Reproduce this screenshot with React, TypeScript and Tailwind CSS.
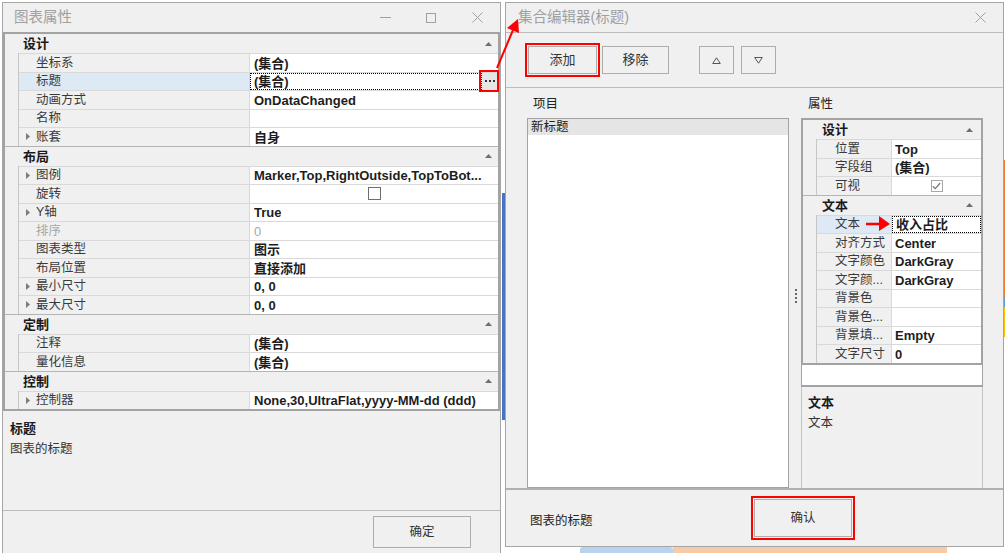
import type { ReactNode } from "react";

type PropRow = {
  label: string;
  value?: string;
  expandable?: boolean;
  disabled?: boolean;
  checkbox?: "empty" | "checked";
  selected?: boolean;
  ellipsis?: boolean;
};

type Category = { title: string; rows: PropRow[] };

const leftCategories: Category[] = [
  {
    title: "设计",
    rows: [
      { label: "坐标系", value: "(集合)" },
      { label: "标题", value: "(集合)", selected: true, ellipsis: true },
      { label: "动画方式", value: "OnDataChanged" },
      { label: "名称", value: "" },
      { label: "账套", value: "自身", expandable: true },
    ],
  },
  {
    title: "布局",
    rows: [
      { label: "图例", value: "Marker,Top,RightOutside,TopToBot...", expandable: true },
      { label: "旋转", checkbox: "empty" },
      { label: "Y轴", value: "True", expandable: true },
      { label: "排序", value: "0", disabled: true },
      { label: "图表类型", value: "图示" },
      { label: "布局位置", value: "直接添加" },
      { label: "最小尺寸", value: "0, 0", expandable: true },
      { label: "最大尺寸", value: "0, 0", expandable: true },
    ],
  },
  {
    title: "定制",
    rows: [
      { label: "注释", value: "(集合)" },
      { label: "量化信息", value: "(集合)" },
    ],
  },
  {
    title: "控制",
    rows: [{ label: "控制器", value: "None,30,UltraFlat,yyyy-MM-dd (ddd)", expandable: true }],
  },
];

const rightCategories: Category[] = [
  {
    title: "设计",
    rows: [
      { label: "位置", value: "Top" },
      { label: "字段组", value: "(集合)" },
      { label: "可视", checkbox: "checked" },
    ],
  },
  {
    title: "文本",
    rows: [
      { label: "文本", value: "收入占比", selected: true },
      { label: "对齐方式", value: "Center" },
      { label: "文字颜色", value: "DarkGray" },
      { label: "文字颜...", value: "DarkGray" },
      { label: "背景色", value: "" },
      { label: "背景色...", value: "" },
      { label: "背景填...", value: "Empty" },
      { label: "文字尺寸", value: "0" },
    ],
  },
];

function CollapseGlyph() {
  return (
    <svg width="7" height="4" viewBox="0 0 7 4">
      <path d="M0 4 L3.5 0 L7 4 Z" fill="#6f6f6f" />
    </svg>
  );
}

function ExpandGlyph() {
  return (
    <svg width="4" height="7" viewBox="0 0 4 7">
      <path d="M0 0 L4 3.5 L0 7 Z" fill="#7c7c7c" />
    </svg>
  );
}

function CaptionButton({ children }: { children: ReactNode }) {
  return <div className="flex h-full w-[46px] items-center justify-center">{children}</div>;
}

function TitleBar({ title, full }: { title: string; full?: boolean }) {
  return (
    <div className="flex h-[29px] shrink-0 items-center">
      <span className="flex-1 pl-[11px] text-[14.5px] text-[#a0a0a0]">{title}</span>
      {full && (
        <>
          <CaptionButton>
            <svg width="11" height="1" viewBox="0 0 11 1">
              <path d="M0 0.5 H11" stroke="#a0a0a0" />
            </svg>
          </CaptionButton>
          <CaptionButton>
            <svg width="10" height="10" viewBox="0 0 10 10">
              <rect x="0.5" y="0.5" width="9" height="9" fill="none" stroke="#a0a0a0" />
            </svg>
          </CaptionButton>
        </>
      )}
      <CaptionButton>
        <svg width="11" height="11" viewBox="0 0 11 11">
          <path d="M0.5 0.5 L10.5 10.5 M10.5 0.5 L0.5 10.5" stroke="#a0a0a0" />
        </svg>
      </CaptionButton>
    </div>
  );
}

function Checkbox({ checked }: { checked?: boolean }) {
  if (checked) {
    return (
      <div className="flex h-[12px] w-[12px] items-center justify-center border border-[#a8a8a8] bg-white">
        <svg width="9" height="8" viewBox="0 0 9 8">
          <path d="M0.8 4.2 L3.3 6.6 L8.2 1" fill="none" stroke="#777" strokeWidth="1.2" />
        </svg>
      </div>
    );
  }
  return <div className="h-[13px] w-[13px] border border-[#6f6f6f] bg-white" />;
}

function GridValue({ row, side }: { row: PropRow; side: "left" | "right" }) {
  const pad = side === "left" ? "pl-[4px]" : "pl-[3px]";
  if (row.checkbox) {
    return (
      <div className="flex flex-1 items-center justify-center border-t border-[#d9d9d9] bg-white">
        <Checkbox checked={row.checkbox === "checked"} />
      </div>
    );
  }
  const text = (
    <span
      className={`overflow-hidden whitespace-nowrap pt-[1px] text-[13px] ${
        row.disabled ? "font-normal text-[#a8a8a8]" : "font-bold text-[#1d1d1d]"
      }`}
    >
      {row.value}
    </span>
  );
  if (row.selected) {
    return (
      <div className="flex min-w-0 flex-1 border-t border-[#d9d9d9] bg-white">
        <div className="flex min-w-0 flex-1 items-center border border-dotted border-black pl-[3px]">
          {text}
        </div>
        {row.ellipsis && (
          <div className="relative flex w-[16px] shrink-0 items-center justify-center gap-[2px] bg-[#e6e6e6]">
            <span className="h-[2px] w-[2px] bg-[#333]" />
            <span className="h-[2px] w-[2px] bg-[#333]" />
            <span className="h-[2px] w-[2px] bg-[#333]" />
            <div className="absolute -bottom-[2px] -left-[3px] -right-[1px] -top-[3px] border-2 border-[#f00]" />
          </div>
        )}
      </div>
    );
  }
  return (
    <div className={`flex min-w-0 flex-1 items-center border-t border-[#d9d9d9] bg-white ${pad}`}>
      {text}
    </div>
  );
}

function PropertyGrid({ categories, side }: { categories: Category[]; side: "left" | "right" }) {
  const isLeft = side === "left";
  return (
    <div className="border-2 border-[#a3a3a3] bg-[#f0f0f0]">
      {categories.map((cat, ci) => (
        <div key={cat.title}>
          <div
            className={`flex items-center justify-between ${
              ci === 0 ? "h-[19px]" : "h-[20px] border-t border-[#b4b4b4]"
            } ${isLeft ? "pl-[18px] pr-[6px]" : "pl-[19px] pr-[8px]"}`}
          >
            <span className="pt-[1px] text-[13px] font-bold text-[#1a1a1a]">{cat.title}</span>
            <CollapseGlyph />
          </div>
          {cat.rows.map((row) => (
            <div key={row.label} className="flex h-[18.5px]">
              <div className="w-[14px] shrink-0 border-r border-[#c6c6c6]" />
              <div
                className={`flex shrink-0 items-center border-r border-t border-[#d9d9d9] ${
                  isLeft ? "w-[231px] pl-[7px]" : "w-[75px] pl-[18px]"
                } ${row.selected ? "bg-[#dde9f5]" : "bg-[#f0f0f0]"}`}
              >
                {isLeft && (
                  <span className="flex w-[10px] shrink-0 items-center">
                    {row.expandable && <ExpandGlyph />}
                  </span>
                )}
                <span
                  className={`whitespace-nowrap pt-[1px] text-[12.5px] ${
                    row.disabled ? "text-[#a8a8a8]" : "text-[#3a3a3a]"
                  }`}
                >
                  {row.label}
                </span>
              </div>
              <GridValue row={row} side={side} />
            </div>
          ))}
        </div>
      ))}
    </div>
  );
}

function Button({ children, className }: { children: ReactNode; className: string }) {
  return (
    <div
      className={`relative flex shrink-0 items-center justify-center border border-[#adadad] bg-[#f0f0f0] text-[#333] ${className}`}
    >
      {children}
    </div>
  );
}

function LeftWindow() {
  return (
    <div className="flex h-[552px] w-[499px] flex-col border border-[#a6a6a6] bg-[#f0f0f0]">
      <TitleBar title="图表属性" full />
      <PropertyGrid categories={leftCategories} side="left" />
      <div className="h-[100px] shrink-0 border-b border-[#bcbcbc] px-[7px] pt-[7px] leading-[21px]">
        <div className="text-[13px] font-bold text-[#1a1a1a]">标题</div>
        <div className="text-[12.5px] text-[#333]">图表的标题</div>
      </div>
      <div className="flex justify-end pr-[29px] pt-[5px]">
        <Button className="h-[32px] w-[98px] text-[12.5px]">确定</Button>
      </div>
    </div>
  );
}

function RightWindow() {
  return (
    <div className="flex h-[547px] w-[499px] flex-col border border-[#a6a6a6] bg-[#f0f0f0]">
      <div className="pl-[1px]">
        <TitleBar title="集合编辑器(标题)" />
      </div>
      <div className="flex h-[56px] shrink-0 items-center border-y border-[#bdbdbd] pl-[22px]">
        <Button className="h-[28px] w-[69px] text-[13px]">
          添加
          <div className="absolute -inset-[4px] border-2 border-[#f00]" />
        </Button>
        <Button className="ml-[5px] h-[28px] w-[67px] text-[13px]">移除</Button>
        <Button className="ml-[30px] h-[28px] w-[35px]">
          <svg width="9" height="7" viewBox="0 0 9 7">
            <path d="M4.5 0.8 L8.3 6.5 L0.7 6.5 Z" fill="none" stroke="#555" />
          </svg>
        </Button>
        <Button className="ml-[7px] h-[28px] w-[35px]">
          <svg width="9" height="7" viewBox="0 0 9 7">
            <path d="M0.7 0.5 L8.3 0.5 L4.5 6.2 Z" fill="none" stroke="#555" />
          </svg>
        </Button>
      </div>
      <div className="flex h-[400px] shrink-0 pl-[21px]">
        <div className="flex w-[262px] shrink-0 flex-col">
          <div className="h-[26px] pl-[6px] pt-[6px] text-[12.5px] leading-[20px] text-[#222]">项目</div>
          <div className="mt-[4px] flex-1 border border-[#a3a3a3] bg-white">
            <div className="h-[16px] bg-[#e5e5e5] pl-[3px] text-[12.5px] leading-[16px] text-[#222]">
              新标题
            </div>
          </div>
        </div>
        <div className="flex w-[12px] shrink-0 flex-col items-center justify-center gap-[2px] pl-[1px] pt-[16px]">
          <span className="h-[2px] w-[2px] bg-[#666]" />
          <span className="h-[2px] w-[2px] bg-[#666]" />
          <span className="h-[2px] w-[2px] bg-[#666]" />
          <span className="h-[2px] w-[2px] bg-[#666]" />
        </div>
        <div className="flex w-[182px] shrink-0 flex-col">
          <div className="h-[30px] pl-[7px] pt-[6px] text-[12.5px] leading-[20px] text-[#222]">属性</div>
          <PropertyGrid categories={rightCategories} side="right" />
          <div className="h-[22px] shrink-0 border-x border-b-2 border-[#a3a3a3] bg-white" />
          <div className="flex-1 border-x border-[#c4c4c4] px-[6px] pt-[5px] leading-[21px]">
            <div className="text-[13px] font-bold text-[#1a1a1a]">文本</div>
            <div className="text-[12.5px] text-[#333]">文本</div>
          </div>
        </div>
      </div>
      <div className="flex flex-1 items-center border-t-2 border-[#b0b0b0] pl-[24px]">
        <span className="w-[224px] pt-[6px] text-[12.5px] text-[#222]">图表的标题</span>
        <Button className="h-[38px] w-[98px] text-[12.5px]">
          确认
          <div className="absolute -inset-[4px] border-2 border-[#f00]" />
        </Button>
      </div>
    </div>
  );
}

function Annotations() {
  return (
    <svg className="pointer-events-none absolute left-0 top-0" width="1005" height="553" viewBox="0 0 1005 553">
      <line x1="497" y1="68" x2="513" y2="30" stroke="#f00" strokeWidth="2" />
      <polygon points="518,19 519,33 507,28" fill="#f00" />
      <line x1="866" y1="224" x2="881" y2="224" stroke="#f00" strokeWidth="2.5" />
      <polygon points="879,216 890,224 879,231" fill="#f00" />
    </svg>
  );
}

export default function App() {
  return (
    <div className="relative flex h-[553px] w-[1005px] overflow-hidden bg-white font-['Liberation_Sans','Noto_Sans_CJK_SC',sans-serif] text-[12px] text-[#333]">
      <div className="ml-[2px] mt-[2px] w-[499px] shrink-0">
        <LeftWindow />
      </div>
      <div className="w-[4px] shrink-0 pl-[1px] pt-[193px]">
        <div className="h-[227px] w-[3px] bg-[#4a72c2]" />
      </div>
      <div className="mt-[2px] flex w-[499px] shrink-0 flex-col">
        <RightWindow />
        <div className="flex h-[6px] pl-[75px]">
          <div className="w-[93px] rounded-t-[3px] bg-[#b7d3ee]" />
          <div className="w-[274px] bg-[#f8cba8]" />
        </div>
      </div>
      <div className="w-[1px] shrink-0 pt-[160px]">
        <div className="h-[137px] bg-[#ed7d31]" />
        <div className="h-[10px] bg-[#5b9bd5]" />
        <div className="h-[30px] bg-[#ffc000]" />
      </div>
      <Annotations />
    </div>
  );
}
